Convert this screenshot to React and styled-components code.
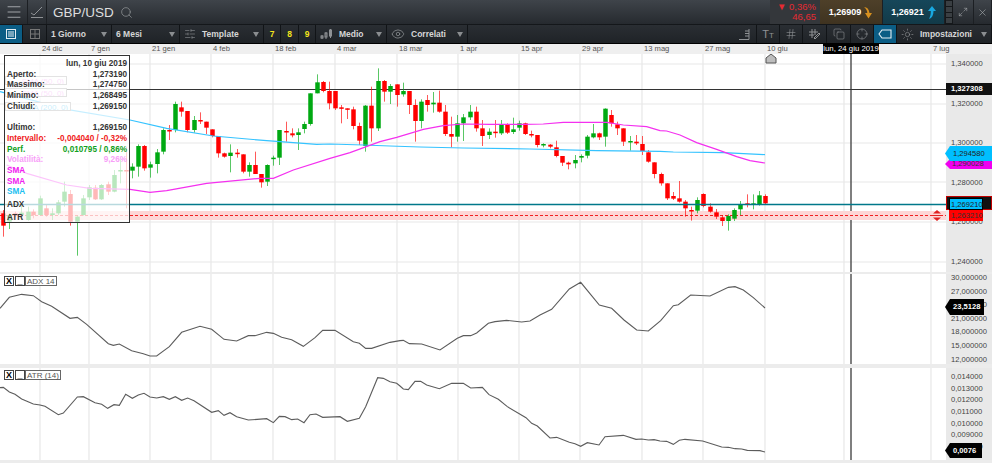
import styled, { createGlobalStyle } from "styled-components";
import { Menu, Search, Hash, X, Maximize2, Eye, SlidersHorizontal, Copy, Crosshair, Sun } from "lucide-react";

const GlobalStyle = createGlobalStyle`
  html, body { margin: 0; padding: 0; background: #fff; }
  body { font-family: "Liberation Sans", Arial, sans-serif; overflow: hidden; }
`;

// candles: [colour, x, wickTop, wickBottom, bodyTop, bodyBottom], read off 3x crops
const fromCrop = (ox, oy, rows) =>
  rows.map(([c, x, wt, wb, bt, bb]) => [c, ox + x / 3, oy + wt / 3, oy + wb / 3, oy + bt / 3, oy + bb / 3]);

const candles = [
  ...fromCrop(0, 50, [
    ["r",10,480,560,490,527],["g",27,490,537,495,515],["r",45,485,500,490,497],["g",62,465,510,488,495],["g",83,470,512,485,510],
    ["r",100,478,505,485,495],["g",119,437,497,445,495],["r",138,465,500,475,495],["g",156,475,510,490,495],["g",175,450,495,457,490],
    ["g",192,395,470,425,455],["r",210,420,527,432,515],["g",230,497,617,500,515],["g",248,435,497,445,495],["g",268,405,450,412,442],
    ["r",286,405,450,413,448],["g",304,402,450,405,448],["r",323,395,435,403,425],["g",341,360,427,375,425],["g",360,330,400,360,363],
    ["r",378,290,475,360,363],["g",396,340,385,350,362],["g",414,283,380,288,350],["r",432,285,362,288,355],["g",450,335,383,343,353],
    ["g",470,297,370,307,342],["g",489,235,313,240,305],["r",507,225,270,240,243],["g",526,155,247,162,240],["r",544,155,200,172,185],
    ["r",562,183,247,183,240],["g",581,198,248,210,240],["r",599,187,222,210,214],["r",618,215,252,215,233],["r",636,238,262,238,258],
    ["r",654,258,323,258,310],["r",672,308,323,310,320],["g",690,283,367,308,318],["r",710,297,323,308,312],["r",729,313,370,313,365],
    ["g",747,337,380,345,365],["r",765,305,372,345,372],["r",784,372,413,372,397],["g",802,343,408,345,395],["g",820,317,347,323,327],
    ["g",838,240,345,240,323],["r",857,215,275,243,247],["r",875,235,262,250,256],["g",893,235,300,247,255],["g",912,215,250,222,237],
    ["g",930,130,227,130,222],["g",950,73,130,97,130],["r",968,93,127,96,123],["r",987,95,178,123,160],
  ]),
  ...fromCrop(330, 60, [
    ["r",15,93,150,93,145],["r",33,135,190,142,145],["r",51,145,177,145,149],["r",70,140,208,148,198],["r",88,188,255,198,242],
    ["g",106,135,275,137,258],["r",124,80,245,137,205],["g",143,25,213,63,205],["r",161,60,125,63,95],["g",181,72,132,78,95],
    ["r",200,73,140,73,105],["g",218,68,110,93,103],["r",236,93,162,93,135],["r",254,118,245,135,183],["g",273,118,205,125,183],
    ["r",291,105,155,120,135],["g",309,96,158,128,133],["r",327,92,158,128,155],["r",345,135,228,155,222],["r",364,170,262,222,230],
    ["g",382,165,245,190,230],["g",400,162,243,172,190],["g",420,135,180,155,172],["r",438,140,215,155,205],["r",457,180,258,205,228],
    ["g",476,205,237,215,225],["r",494,180,233,215,219],["g",512,180,225,195,220],["r",531,190,222,195,218],["g",549,173,222,208,216],
    ["g",567,182,212,190,203],["r",585,188,225,190,222],["r",603,212,232,222,226],["r",622,225,262,225,255],["g",640,250,262,252,256],
    ["r",660,252,265,254,260],["r",679,242,292,262,288],["r",697,288,318,288,308],["r",715,305,328,308,313],["g",734,285,325,300,310],
    ["g",752,283,307,288,293],["g",771,225,295,230,287],["g",789,192,235,220,232],["r",807,218,240,220,232],["g",825,145,260,146,230],
    ["r",843,150,200,165,190],["r",862,185,225,193,205],["r",880,205,258,205,245],["g",900,228,272,243,246],["r",918,225,255,245,250],
    ["r",937,228,285,252,273],["r",955,270,308,277,305],["r",973,307,355,307,342],
  ]),
  ...fromCrop(640, 60, [
    ["r",62,338,377,342,370],["r",80,370,420,370,415],["r",98,396,420,408,416],["r",116,363,428,415,425],["r",135,420,470,425,445],
    ["r",153,440,482,450,454],["g",171,412,460,420,452],["r",189,400,442,402,438],["r",210,430,458,440,455],["r",228,447,477,457,470],
    ["r",247,465,498,472,483],["g",265,463,512,468,483],["g",283,445,483,450,476],["g",301,423,465,432,448],["r",320,403,442,430,434],
    ["g",338,403,448,430,434],["g",356,393,437,406,432],["r",375,403,433,408,430],
  ]),
];

const cropLine = (ox, oy, pts) => pts.map(([x, y]) => `${ox + x / 3},${oy + y / 3}`).join(" ");

const smaFast = [
  cropLine(0, 50, [[20,345],[80,370],[200,405],[270,415],[390,418],[450,427],[500,422],[620,400],[780,385],[820,385],[880,360],[990,325]]),
  cropLine(330, 60, [[60,278],[150,245],[200,232],[280,208],[340,197],[400,192],[480,193],[580,193],[640,192],[700,187],[830,187],[880,195],[950,200],[990,212]]),
  cropLine(640, 60, [[80,213],[120,225],[170,248],[230,268],[290,290],[330,302],[375,309]]),
].join(" ");

const smaSlow = [
  cropLine(0, 50, [[0,125],[200,178],[390,210],[500,235],[640,258],[800,272],[950,283],[990,282]]),
  cropLine(330, 60, [[100,255],[180,258],[270,261],[400,264],[600,267],[800,272],[990,274]]),
  cropLine(640, 60, [[100,276],[250,278],[375,284]]),
].join(" ");

const adxLine = [
  cropLine(0, 265, [[0,130],[28,97],[65,88],[100,92],[125,110],[155,124],[210,160],[232,157],[260,178],[325,236],[340,241],[358,237],[395,257],[430,266],[450,273],[470,273],[508,245],[545,202],[600,184],[635,193],[672,223],[710,228],[745,212],[765,212],[800,202],[820,205],[845,217],[875,224],[910,244],[945,218],[968,196],[1005,196],[1060,230],[1078,235],[1097,250],[1115,250],[1170,232],[1200,227]]),
  cropLine(400, 265, [[10,226],[28,236],[65,237],[120,255],[172,220],[190,212],[212,212],[230,204],[265,175],[285,170],[320,166],[365,171],[390,168],[420,150],[455,133],[508,72],[542,52],[598,120],[635,130],[672,165],[710,195],[745,198],[782,167],[820,122],[835,119],[872,90],[930,93],[985,67],[1005,65],[1030,75],[1060,98],[1095,129]]),
].join(" ");

const atrLine = [
  cropLine(0, 265, [[0,368],[10,367],[28,381],[45,388],[65,402],[100,417],[120,420],[135,424],[175,449],[190,444],[232,396],[250,395],[285,413],[305,418],[323,430],[342,419],[358,421],[377,388],[397,400],[415,390],[432,385],[450,396],[470,399],[490,395],[508,403],[526,395],[545,406],[563,399],[582,407],[635,442],[655,437],[672,451],[690,443],[710,455],[745,465],[800,461],[820,473],[838,454],[855,455],[875,464],[893,462],[912,473],[930,449],[948,447],[968,457],[1020,455],[1042,469],[1078,460],[1097,425],[1133,338],[1150,340],[1170,350],[1190,355],[1200,363]]),
  cropLine(400, 265, [[10,372],[25,374],[45,349],[62,349],[80,360],[118,371],[155,355],[190,355],[212,369],[247,367],[267,389],[295,403],[322,425],[378,458],[395,475],[412,483],[450,519],[470,517],[508,532],[525,536],[542,544],[562,533],[597,540],[615,515],[670,511],[708,523],[725,522],[745,525],[762,524],[780,528],[800,529],[820,538],[838,526],[855,523],[908,528],[965,546],[985,547],[1005,551],[1025,552],[1042,556],[1080,557],[1095,561]]),
].join(" ");

const gridX = [40, 89, 150, 211, 273, 335, 397, 458, 519, 580, 642, 703, 765, 844, 931];
const gridY = [64, 104, 143, 182, 222, 262];
const dates = [
  ["", 40], ["24 dic", 49], ["7 gen", 61], ["21 gen", 61], ["4 feb", 62], ["18 feb", 62], ["4 mar", 62], ["18 mar", 61],
  ["1 apr", 61], ["15 apr", 61], ["29 apr", 62], ["13 mag", 61], ["27 mag", 62], ["10 giu", 166], ["7 lug", 61],
];

const Page = styled.div`
  width: 992px;
  height: 463px;
  display: flex;
  flex-direction: column;
  overflow: hidden;
  background: #ececec;
`;
const TopBar = styled.div`
  height: 24px;
  display: flex;
  background: linear-gradient(#3f444a, #262a2f);
  border-bottom: 1px solid #14171a;
  color: #ddd;
`;
const TopCell = styled.div`
  width: ${(p) => p.$w}px;
  display: flex;
  align-items: center;
  justify-content: center;
  gap: 3px;
  border-right: 1px solid #1c1f23;
  box-sizing: border-box;
  background: ${(p) => p.$bg || "transparent"};
  color: #a3a7ab;
`;
const Symbol = styled.div`
  display: flex;
  align-items: center;
  gap: 6px;
  padding-left: 6px;
  font-size: 13.5px;
  color: #dedede;
  flex: 1;
  svg { color: #8d9194; }
`;
const Change = styled.div`
  width: 50px;
  background: #34373b;
  color: #e62a32;
  font-size: 9.5px;
  text-align: right;
  padding: 2px 4px 0 0;
  box-sizing: border-box;
  line-height: 10px;
`;
const Quote = styled(TopCell)`
  color: #fff;
  font-size: 9px;
  font-weight: bold;
`;
const Strip = styled.div`
  width: 8px;
  display: flex;
  flex-direction: column;
  gap: 1px;
  background: #15181b;
  padding: 1px 1px;
  box-sizing: border-box;
  span { flex: 1; background: #3a3f43; }
`;
const ToolBar = styled.div`
  height: 18px;
  display: flex;
  background: linear-gradient(#2a2e33, #1f2327);
  border-bottom: 1px solid #000;
  color: #d6d6d6;
  font-size: 8.5px;
  font-weight: bold;
`;
const Tool = styled.div`
  width: ${(p) => p.$w}px;
  flex: none;
  display: flex;
  align-items: center;
  justify-content: ${(p) => (p.$center ? "center" : "flex-start")};
  gap: 6px;
  padding-left: ${(p) => (p.$center ? 0 : 4)}px;
  box-sizing: border-box;
  border-right: 1px solid #111417;
  background: ${(p) => (p.$active ? "#0b5d85" : "transparent")};
  color: ${(p) => (p.$yellow ? "#f4e51c" : "#d6d6d6")};
  svg { color: ${(p) => (p.$active ? "#e4eef3" : "#8f9295")}; flex: none; }
`;
const Caret = styled.span`
  width: 0;
  height: 0;
  margin-left: auto;
  margin-right: 4px;
  border-left: 3px solid transparent;
  border-right: 3px solid transparent;
  border-top: 5px solid #8a8d90;
`;
const Filler = styled.div`
  flex: 1;
`;
const SmallT = styled.span`
  color: #8f9295;
  font-size: 11px;
  font-weight: normal;
  small { font-size: 8px; }
`;
const DateAxis = styled.div`
  height: 10px;
  position: relative;
  display: flex;
  background: #efefef;
  font-size: 7.6px;
  line-height: 10px;
  color: #555;
`;
const DateCell = styled.div`
  width: ${(p) => p.$w}px;
  flex: none;
  padding-left: 2px;
  box-sizing: border-box;
`;
const CrossDate = styled.div`
  position: absolute;
  left: 823px;
  top: -1px;
  width: 56px;
  height: 11px;
  background: #000;
  color: #fff;
  font-size: 7.8px;
  line-height: 11px;
  text-align: center;
`;
const Pane = styled.div`
  position: relative;
  height: ${(p) => p.$h}px;
  display: flex;
  margin-bottom: ${(p) => p.$gap}px;
  background: #fff;
`;
const Plot = styled.svg`
  width: 946px;
  height: 100%;
  display: block;
  flex: none;
`;
const PriceAxis = styled.div`
  flex: 1;
  position: relative;
  display: flex;
  flex-direction: column;
  gap: ${(p) => p.$gap}px;
  padding: ${(p) => p.$top}px 0 0 5px;
  background: #e9e9e9;
  font-size: 7.6px;
  line-height: 8px;
  color: #444;
`;
const PriceTag = styled.div`
  position: absolute;
  left: ${(p) => p.$left ?? 0}px;
  right: ${(p) => p.$right ?? 0}px;
  top: ${(p) => p.$top}px;
  height: ${(p) => p.$h}px;
  line-height: ${(p) => p.$h}px;
  padding-left: ${(p) => p.$pad ?? 4}px;
  background: ${(p) => p.$bg};
  color: ${(p) => p.$fg};
  font-weight: ${(p) => (p.$bold ? "bold" : "normal")};
  clip-path: ${(p) => (p.$arrow ? "polygon(5px 0, 100% 0, 100% 100%, 5px 100%, 0 50%)" : "none")};
  border: ${(p) => p.$border || "none"};
  box-sizing: border-box;
`;
const Legend = styled.div`
  position: absolute;
  left: 5px;
  top: ${(p) => p.$top}px;
  width: ${(p) => p.$w}px;
  height: 9px;
  border: 1px solid #999;
  background: #fff;
  color: ${(p) => p.$color};
  font-size: 8px;
  line-height: 9px;
  text-align: right;
  padding-right: 2px;
  box-sizing: border-box;
  white-space: nowrap;
  overflow: hidden;
`;
const InfoBox = styled.div`
  position: absolute;
  left: 4px;
  top: 1px;
  width: 126px;
  height: 168px;
  box-sizing: border-box;
  border: 1px solid #333;
  background: rgba(255, 255, 255, 0.72);
  padding: 3px 2px 0 2px;
  font-size: 8.2px;
  font-weight: bold;
  line-height: 10.7px;
  color: #333;
`;
const InfoRow = styled.div`
  display: flex;
  justify-content: space-between;
  height: ${(p) => p.$h ?? 10.7}px;
  color: ${(p) => p.$color || "#333"};
`;
const PaneTools = styled.div`
  position: absolute;
  left: 4px;
  top: 2px;
  display: flex;
  height: 10px;
  font-size: 8px;
  line-height: 9px;
  color: #555;
`;
const PaneButton = styled.div`
  width: 10px;
  border: 1px solid #444;
  box-sizing: border-box;
  margin-right: 1px;
  text-align: center;
  color: #000;
  font-size: 9px;
  font-weight: bold;
  background: #fff;
`;
const PaneLabel = styled.div`
  border: 1px solid #666;
  box-sizing: border-box;
  padding: 0 1px;
  margin-left: -1px;
  background: #fff;
`;

const TrendIcon = () => (
  <svg width="14" height="14" viewBox="0 0 14 14" fill="none" stroke="#8f9295" strokeWidth="1">
    <path d="M1 8l3 2 8-8" />
    <path d="M1 12.5h12" />
  </svg>
);
const ListIcon = () => (
  <svg width="12" height="12" viewBox="0 0 12 12" fill="none" stroke="currentColor" strokeWidth="1">
    <rect x="1.5" y="1.5" width="9" height="9" />
    <path d="M3 4h6M3 6h6M3 8h6" />
  </svg>
);
const PanelsIcon = () => (
  <svg width="12" height="12" viewBox="0 0 12 12" fill="none" stroke="#777" strokeWidth="1">
    <rect x="1.5" y="1.5" width="9" height="9" />
    <path d="M6 1.5v9M1.5 6h9" />
  </svg>
);
const CandleIcon = () => (
  <svg width="13" height="12" viewBox="0 0 13 12" fill="none" stroke="#8f9295" strokeWidth="1">
    <path d="M2 7v4M6 4v7M10.5 1v9" />
    <rect x="1" y="8" width="2" height="2" />
    <rect x="5" y="5" width="2" height="4" />
    <rect x="9.5" y="2" width="2" height="6" />
  </svg>
);
const LevelsIcon = () => (
  <svg width="13" height="13" viewBox="0 0 13 13" fill="none" stroke="#8f9295" strokeWidth="1">
    <path d="M1 11.5h10V1M7 3h4M7 5.500h4M7 8h4" />
  </svg>
);
const DrawingIcon = () => (
  <svg width="13" height="13" viewBox="0 0 13 13" fill="none" stroke="#8f9295" strokeWidth="1">
    <path d="M4 1v9M7 1v6M1 4h9M1 7h5M7 11l5-5-1-1-5 5z" />
  </svg>
);
const TagIcon = () => (
  <svg width="14" height="10" viewBox="0 0 14 10" fill="none" stroke="#e4eef3" strokeWidth="1.1">
    <path d="M13 1H4L1 5l3 4h9z" />
  </svg>
);
const BendArrow = ({ color, up }) => (
  <svg width="9" height="13" viewBox="0 0 9 13" fill={color}>
    {up ? <path d="M5 0l4 5H6.500C6.500 9 5 12 2 13c1.500-2.500 1.800-5 1.800-8H1z" /> : <path d="M0 1c3 0 5 2 5.500 6H8l-3.500 5.500L1 7h2.300C3.200 4.500 2 2.500 0 1z" />}
  </svg>
);

const Candles = () =>
  candles.map(([c, x, wt, wb, bt, bb], i) => {
    const col = c === "r" ? "#ff0000" : "#00a912";
    const cx = Math.round(x) + 0.5;
    return (
      <g key={i}>
        <line x1={cx} x2={cx} y1={wt} y2={wb} stroke={col} strokeOpacity="0.65" />
        <rect x={cx - 2.25} y={bt} width="4.5" height={Math.max(bb - bt, 1.5)} fill={col} />
      </g>
    );
  });

const Grid = ({ top, h, rows = [] }) => (
  <g stroke="#e7e7e7" strokeWidth="1.2">
    {gridX.map((x) => (
      <line key={x} x1={x} x2={x} y1={top} y2={top + h} />
    ))}
    {rows.map((y) => (
      <line key={y} x1="0" x2="946" y1={y} y2={y} />
    ))}
    <line x1="851" x2="851" y1={top} y2={top + h} stroke="#555" strokeWidth="1.5" />
  </g>
);

const Dropdown = ({ w, icon, label }) => (
  <Tool $w={w}>
    {icon}
    {label}
    <Caret />
  </Tool>
);

const Info = ({ label, value, color, h }) => (
  <InfoRow $color={color} $h={h}>
    <span>{label}</span>
    <span>{value}</span>
  </InfoRow>
);

export default function App() {
  return (
    <Page>
      <GlobalStyle />
      <TopBar>
        <TopCell $w={28}><Menu size={18} strokeWidth={1.3} /></TopCell>
        <TopCell $w={19}><TrendIcon /></TopCell>
        <Symbol>GBP/USD <Search size={13} strokeWidth={1.4} /></Symbol>
        <Change>
          <div>▼ 0,36%</div>
          <div>46,65</div>
        </Change>
        <Quote $w={63} $bg="linear-gradient(#4e4029, #3f3320)">1,26909 <BendArrow color="#d8911f" /></Quote>
        <Quote $w={62} $bg="linear-gradient(#16475a, #123a48)">1,26921 <BendArrow color="#18a8e0" up /></Quote>
        <Strip><span /><span /><span /><span /></Strip>
        <TopCell $w={21}><Maximize2 size={10} strokeWidth={1.4} /></TopCell>
        <TopCell $w={18}><X size={11} strokeWidth={1.4} /></TopCell>
      </TopBar>
      <ToolBar>
        <Tool $w={23} $center $active><ListIcon /></Tool>
        <Tool $w={24} $center><PanelsIcon /></Tool>
        <Dropdown w={65} label="1 Giorno" />
        <Dropdown w={68} label="6 Mesi" />
        <Dropdown w={84} icon={<SlidersHorizontal size={12} strokeWidth={1.2} />} label="Template" />
        <Tool $w={17} $center $yellow>7</Tool>
        <Tool $w={18} $center $yellow>8</Tool>
        <Tool $w={17} $center $yellow>9</Tool>
        <Dropdown w={71} icon={<CandleIcon />} label="Medio" />
        <Dropdown w={81} icon={<Eye size={14} strokeWidth={1.3} />} label="Correlati" />
        <Filler />
        <Tool $w={24} $center><LevelsIcon /></Tool>
        <Tool $w={23} $center><SmallT>T<small>T</small></SmallT></Tool>
        <Tool $w={23} $center><Hash size={12} strokeWidth={1.2} /></Tool>
        <Tool $w={24} $center><DrawingIcon /></Tool>
        <Tool $w={24} $center><Copy size={12} strokeWidth={1.2} /></Tool>
        <Tool $w={23} $center><Crosshair size={12} strokeWidth={1.2} /></Tool>
        <Tool $w={23} $center $active><TagIcon /></Tool>
        <Dropdown w={95} icon={<Sun size={13} strokeWidth={1.2} />} label="Impostazioni" />
      </ToolBar>
      <DateAxis>
        {dates.map(([label, w], i) => (
          <DateCell key={i} $w={w}>{label}</DateCell>
        ))}
        <CrossDate>lun, 24 giu 2019</CrossDate>
      </DateAxis>

      <Pane $h={218} $gap={2}>
        <Plot viewBox="0 54 946 218" preserveAspectRatio="none">
          <Grid top={54} h={218} rows={gridY} />
          <rect x="0" y="211" width="946" height="9" fill="#fdd6d6" />
          <line x1="0" x2="946" y1="215.5" y2="215.5" stroke="#f02020" strokeDasharray="3 2" />
          <line x1="0" x2="946" y1="89.5" y2="89.5" stroke="#333" strokeWidth="1" />
          <Candles />
          <polyline points={smaSlow} fill="none" stroke="#35c3ff" strokeWidth="1.2" />
          <polyline points={smaFast} fill="none" stroke="#f430ef" strokeWidth="1.2" />
          <line x1="0" x2="946" y1="204.5" y2="204.5" stroke="#00788a" strokeWidth="1.5" />
          <path d="M766 63v-5l5-4 5 4v5z" fill="#bdbdbd" stroke="#555" />
          <path d="M937 210l4 3.500h-8zM937 221l4-3.500h-8z" fill="#e02020" />
          <line x1="933" x2="941" y1="215.5" y2="215.5" stroke="#e02020" />
        </Plot>
        <PriceAxis $top={6} $gap={31.6}>
          <span>1,340000</span>
          <span>1,320000</span>
          <span>1,300000</span>
          <span>1,280000</span>
          <span>1,260000</span>
          <span>1,240000</span>
          <PriceTag $top={29} $h={12} $bg="#111" $fg="#fff" $bold $pad={5}>1,327308</PriceTag>
          <PriceTag $top={105} $left={-1} $h={10} $bg="#f000f0" $fg="#333" $arrow $pad={7}>1,290028</PriceTag>
          <PriceTag $top={92} $left={-1} $h={15} $bg="#00bfff" $fg="#222" $arrow $pad={8}>1,294580</PriceTag>
          <PriceTag $top={142} $h={14} $bg="#111" $fg="#111" $border="1px solid #c00000" />
          <PriceTag $top={144} $left={3} $right={9} $h={12} $bg="#00bfff" $fg="#222" $border="1px solid #000" $pad={1}>1,269210</PriceTag>
          <PriceTag $top={156} $left={3} $right={9} $h={11} $bg="#ff0000" $fg="#333" $pad={2}>1,263210</PriceTag>
        </PriceAxis>
        <Legend $top={22} $w={62} $color="#f090f0">SMA (50, 0)</Legend>
        <Legend $top={34} $w={62} $color="#f090f0">SMA (50, 0)</Legend>
        <Legend $top={48} $w={66} $color="#40c0f0">SMA (200, 0)</Legend>
        <InfoBox>
          <InfoRow><span /><span>lun, 10 giu 2019</span></InfoRow>
          <Info label="Aperto:" value="1,273190" />
          <Info label="Massimo:" value="1,274750" />
          <Info label="Minimo:" value="1,268495" />
          <Info label="Chiudi:" value="1,269150" h={21.4} />
          <Info label="Ultimo:" value="1,269150" />
          <Info label="Intervallo:" value="-0,004040 / -0,32%" color="#f02020" />
          <Info label="Perf." value="0,010795 / 0,86%" color="#10a020" />
          <Info label="Volatilità:" value="9,26%" color="#f8a0f8" />
          <Info label="SMA" color="#f020f0" />
          <Info label="SMA" color="#f020f0" />
          <Info label="SMA" color="#20c0f0" h={13} />
          <Info label="ADX" h={13} />
          <Info label="ATR" />
        </InfoBox>
      </Pane>

      <Pane $h={90} $gap={4}>
        <Plot viewBox="0 274 946 90" preserveAspectRatio="none">
          <Grid top={274} h={90} />
          <polyline points={adxLine} fill="none" stroke="#5c5c5c" strokeWidth="1.1" />
        </Plot>
        <PriceAxis $top={0} $gap={5.6}>
          <span>30,000000</span>
          <span>27,000000</span>
          <span>24,000000</span>
          <span>21,000000</span>
          <span>18,000000</span>
          <span>15,000000</span>
          <span>12,000000</span>
          <PriceTag $top={25} $left={-1} $right={8} $h={16} $bg="#000" $fg="#fff" $arrow $bold $pad={8}>23,5128</PriceTag>
        </PriceAxis>
        <PaneTools>
          <PaneButton>X</PaneButton>
          <PaneButton>_</PaneButton>
          <PaneLabel>ADX 14</PaneLabel>
        </PaneTools>
      </Pane>

      <Pane $h={92} $gap={3}>
        <Plot viewBox="0 368 946 92" preserveAspectRatio="none">
          <Grid top={368} h={92} />
          <polyline points={atrLine} fill="none" stroke="#5c5c5c" strokeWidth="1.1" />
        </Plot>
        <PriceAxis $top={5} $gap={3.7}>
          <span>0,014000</span>
          <span>0,013000</span>
          <span>0,012000</span>
          <span>0,011000</span>
          <span>0,010000</span>
          <span>0,009000</span>
          <span>0,008000</span>
          <PriceTag $top={75} $left={-1} $right={10} $h={15} $bg="#000" $fg="#fff" $arrow $bold $pad={8}>0,0076</PriceTag>
        </PriceAxis>
        <PaneTools>
          <PaneButton>X</PaneButton>
          <PaneButton>_</PaneButton>
          <PaneLabel>ATR (14)</PaneLabel>
        </PaneTools>
      </Pane>
    </Page>
  );
}
